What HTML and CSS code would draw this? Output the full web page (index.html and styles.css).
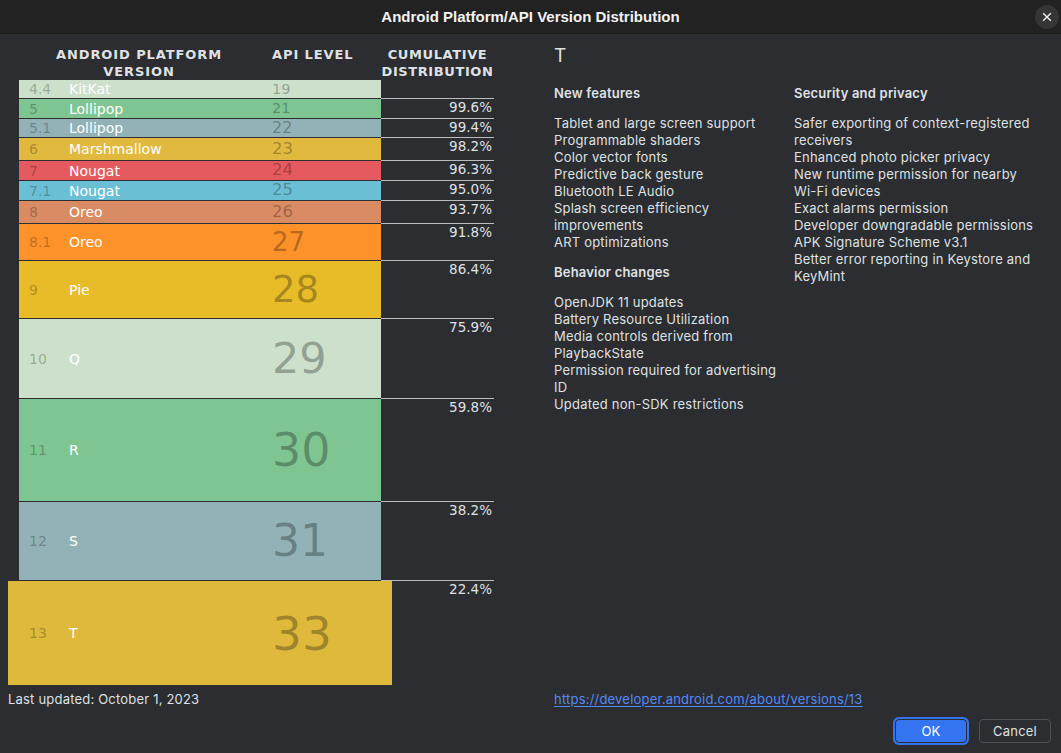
FILE: index.html
```html
<!DOCTYPE html>
<html lang="en">
<head>
<meta charset="utf-8">
<title>Android Platform/API Version Distribution</title>
<link rel="stylesheet" href="styles.css">
</head>
<body>
<div class="window">
  <header class="titlebar">
    <span></span>
    <h1 class="title">Android Platform/API Version Distribution</h1>
    <button class="close" aria-label="Close">
      <svg width="10" height="10" viewBox="0 0 10 10"><path d="M1.2 1.2L8.8 8.8M8.8 1.2L1.2 8.8" stroke="#f2f2f2" stroke-width="1.4" fill="none"/></svg>
    </button>
  </header>

  <main class="main">
    <section class="content">
      <div class="table">
        <div class="thead">
          <div class="th th-version">ANDROID PLATFORM<br>VERSION</div>
          <div class="th th-api">API LEVEL</div>
          <div class="th th-cum">CUMULATIVE<br>DISTRIBUTION</div>
        </div>

        <div class="row first" style="--h:18px;--fs:14.5px">
          <div class="bar c-kitkat"><span class="ver">4.4</span><span class="name">KitKat</span><span class="api">19</span></div>
          <div class="cum"></div>
        </div>
        <div class="row" style="--h:19px;--fs:14.5px">
          <div class="bar c-lollipop"><span class="ver">5</span><span class="name">Lollipop</span><span class="api">21</span></div>
          <div class="cum">99.6%</div>
        </div>
        <div class="row" style="--h:18px;--fs:16px">
          <div class="bar c-lollipop2"><span class="ver">5.1</span><span class="name">Lollipop</span><span class="api">22</span></div>
          <div class="cum">99.4%</div>
        </div>
        <div class="row" style="--h:22px;--fs:16.5px">
          <div class="bar c-marsh"><span class="ver">6</span><span class="name">Marshmallow</span><span class="api">23</span></div>
          <div class="cum">98.2%</div>
        </div>
        <div class="row" style="--h:19px;--fs:16.5px">
          <div class="bar c-nougat"><span class="ver">7</span><span class="name">Nougat</span><span class="api">24</span></div>
          <div class="cum">96.3%</div>
        </div>
        <div class="row" style="--h:19px;--fs:16.5px">
          <div class="bar c-nougat2"><span class="ver">7.1</span><span class="name">Nougat</span><span class="api">25</span></div>
          <div class="cum">95.0%</div>
        </div>
        <div class="row" style="--h:22px;--fs:16.5px">
          <div class="bar c-oreo"><span class="ver">8</span><span class="name">Oreo</span><span class="api">26</span></div>
          <div class="cum">93.7%</div>
        </div>
        <div class="row" style="--h:36px;--fs:26px">
          <div class="bar c-oreo2"><span class="ver">8.1</span><span class="name">Oreo</span><span class="api">27</span></div>
          <div class="cum">91.8%</div>
        </div>
        <div class="row" style="--h:57px;--fs:37px">
          <div class="bar c-pie"><span class="ver">9</span><span class="name">Pie</span><span class="api">28</span></div>
          <div class="cum">86.4%</div>
        </div>
        <div class="row" style="--h:79px;--fs:43px">
          <div class="bar c-kitkat"><span class="ver">10</span><span class="name">Q</span><span class="api">29</span></div>
          <div class="cum">75.9%</div>
        </div>
        <div class="row" style="--h:102px;--fs:46px">
          <div class="bar c-lollipop"><span class="ver">11</span><span class="name">R</span><span class="api">30</span></div>
          <div class="cum">59.8%</div>
        </div>
        <div class="row" style="--h:78px;--fs:44px">
          <div class="bar c-lollipop2"><span class="ver">12</span><span class="name">S</span><span class="api">31</span></div>
          <div class="cum">38.2%</div>
        </div>
        <div class="row" style="--h:104px;--fs:47px">
          <div class="bar c-t selected"><span class="ver">13</span><span class="name">T</span><span class="api">33</span></div>
          <div class="cum">22.4%</div>
        </div>
      </div>

      <div class="details">
        <h2 class="codename">T</h2>
        <div class="cols">
          <div class="col col-1">
            <h3>New features</h3>
            <ul>
              <li>Tablet and large screen support</li>
              <li>Programmable shaders</li>
              <li>Color vector fonts</li>
              <li>Predictive back gesture</li>
              <li>Bluetooth LE Audio</li>
              <li>Splash screen efficiency improvements</li>
              <li>ART optimizations</li>
            </ul>
            <h3>Behavior changes</h3>
            <ul>
              <li>OpenJDK 11 updates</li>
              <li>Battery Resource Utilization</li>
              <li>Media controls derived from PlaybackState</li>
              <li>Permission required for advertising ID</li>
              <li>Updated non-SDK restrictions</li>
            </ul>
          </div>
          <div class="col col-2">
            <h3>Security and privacy</h3>
            <ul>
              <li>Safer exporting of <span class="nowrap">context-registered</span> receivers</li>
              <li>Enhanced photo picker privacy</li>
              <li>New runtime permission for nearby <span class="nowrap">Wi-Fi</span> devices</li>
              <li>Exact alarms permission</li>
              <li>Developer downgradable permissions</li>
              <li>APK Signature Scheme v3.1</li>
              <li>Better error reporting in Keystore and KeyMint</li>
            </ul>
          </div>
        </div>
      </div>
    </section>

    <div class="footer">
      <span class="updated">Last updated: October 1, 2023</span>
      <a class="link" href="#">https://developer.android.com/about/versions/13</a>
    </div>

    <div class="buttons">
      <button class="btn btn-ok">OK</button>
      <button class="btn btn-cancel">Cancel</button>
    </div>
  </main>
</div>
</body>
</html>
```

FILE: styles.css
```css
* { box-sizing: border-box; }

html, body {
  margin: 0;
  padding: 0;
  background: #2b2d30;
}

body {
  width: 1061px;
  height: 753px;
  overflow: hidden;
  color: #dfe1e5;
  font-family: Inter, "Noto Sans", sans-serif;
  font-size: 13px;
  letter-spacing: 0.2px;
}

.window {
  display: flex;
  flex-direction: column;
  height: 753px;
}

/* title bar */
.titlebar {
  height: 34px;
  background: #222222;
  border-bottom: 1px solid #1b1b1b;
  display: grid;
  grid-template-columns: 1fr auto 1fr;
  align-items: center;
}

.title {
  margin: 0;
  font-family: "Liberation Sans", Arial, sans-serif;
  font-weight: bold;
  font-size: 15px;
  color: #f2f2f2;
  letter-spacing: 0;
}

.close {
  justify-self: end;
  margin-right: 2px;
  width: 24px;
  height: 24px;
  border-radius: 50%;
  border: none;
  padding: 0;
  background: #353535;
  display: flex;
  align-items: center;
  justify-content: center;
}

/* main */
.main {
  flex: 1;
  display: flex;
  flex-direction: column;
}

.content {
  display: flex;
  align-items: flex-start;
}

/* table */
.table {
  margin-left: 19px;
  margin-top: 12px;
  width: 475px;
  font-family: "DejaVu Sans", sans-serif;
  letter-spacing: 0;
}

.thead {
  display: flex;
  font-weight: bold;
  font-size: 13px;
  line-height: 17px;
  letter-spacing: 0.9px;
  color: #dfe1e5;
}

.th-version { width: 240px; text-align: center; }
.th-api { width: 122px; padding-left: 13px; }
.th-cum { width: 113px; text-align: center; letter-spacing: 0.6px; }

.row {
  display: flex;
}

.bar {
  flex: 0 0 362px;
  width: 362px;
  height: var(--h);
  margin-top: 1px;
  padding-left: 10px;
  display: grid;
  grid-template-columns: 40px 203px 1fr;
  align-items: center;
  font-size: 14px;
  white-space: nowrap;
  overflow: hidden;
}

.row.first .bar { margin-top: 0; }

.bar.selected {
  flex-basis: 384px;
  width: 384px;
  margin-left: -11px;
  margin-right: -11px;
  padding-left: 21px;
}

.ver { color: rgba(0, 0, 0, 0.27); }
.name { color: #ffffff; }
.api {
  color: rgba(0, 0, 0, 0.3);
  font-size: var(--fs);
  line-height: 1;
}

.cum {
  flex: 0 0 113px;
  width: 113px;
  border-top: 1px solid #bcbcbc;
  text-align: right;
  padding-right: 2px;
  font-size: 13.5px;
  color: #dfe1e5;
}

.row.first .cum { border-top: none; }

.c-kitkat { background: #cde0cc; }
.c-lollipop { background: #7ec592; }
.c-lollipop2 { background: #92b2b7; }
.c-marsh { background: #e0b93e; }
.c-nougat { background: #e55a5e; }
.c-nougat2 { background: #6bbfd4; }
.c-oreo { background: #d98b64; }
.c-oreo2 { background: #fe922a; }
.c-pie { background: #e8bc29; }
.c-t { background: #deb93c; }

/* details */
.details {
  margin-left: 60px;
  margin-top: 10px;
}

.codename {
  margin: 0;
  font-size: 19px;
  font-weight: 400;
  line-height: 23px;
  color: #dfe1e5;
  letter-spacing: 0;
}

.cols {
  display: flex;
  gap: 10px;
  margin-top: 18px;
}

.col-1 { width: 230px; }
.col-2 { width: 250px; }

.nowrap { white-space: nowrap; }

.col h3 {
  margin: 0 0 13px;
  font-size: 13px;
  font-weight: 600;
  line-height: 17px;
}

.col ul {
  list-style: none;
  margin: 0 0 13px;
  padding: 0;
}

.col li {
  line-height: 17px;
}

/* footer */
.footer {
  display: grid;
  grid-template-columns: 546px 1fr;
  padding-left: 8px;
  margin-top: 6px;
  line-height: 17px;
}

.link {
  color: #548af7;
  text-decoration: underline;
  text-underline-offset: 2px;
}

.buttons {
  display: flex;
  justify-content: flex-end;
  gap: 12px;
  padding-right: 10px;
  margin-top: 11px;
}

.btn {
  width: 72px;
  height: 24px;
  border-radius: 4px;
  font-family: Inter, "Noto Sans", sans-serif;
  font-size: 13px;
  letter-spacing: 0.2px;
  padding: 0;
}

.btn-ok {
  background: #3574f0;
  color: #ffffff;
  border: 1px solid #2b2d30;
  box-shadow: 0 0 0 2px #3574f0;
  border-radius: 4px;
}

.btn-cancel {
  background: #2b2d30;
  color: #dfe1e5;
  border: 1px solid #4e5157;
}
```
